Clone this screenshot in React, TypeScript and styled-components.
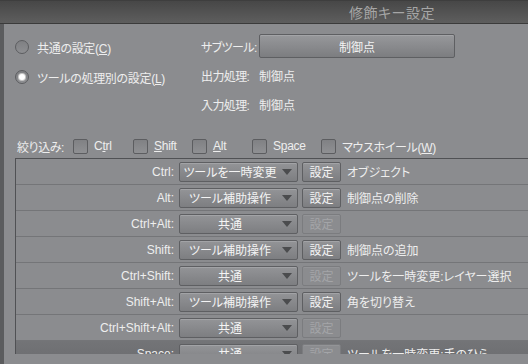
import styled, { createGlobalStyle } from 'styled-components'

const GlobalStyle = createGlobalStyle`
  html, body {
    margin: 0;
    padding: 0;
    background: #8b8c8f;
  }
  body {
    font-family: "Liberation Sans", "Noto Sans CJK JP", sans-serif;
    font-size: 12px;
    font-feature-settings: "palt";
    color: #eeeeee;
  }
`

const Window = styled.div`
  width: 528px;
  height: 364px;
  overflow: hidden;
  background: #8b8c8f;
  display: flex;
  flex-direction: column;
`

const TitleBar = styled.div`
  flex: none;
  height: 24px;
  box-sizing: border-box;
  border-top: 1px solid #3e3e3e;
  border-bottom: 1px solid #3b3b3b;
  background: linear-gradient(#474747, #5e5e5e);
  display: flex;
  align-items: center;
  padding-left: 349px;
  color: #a6a6a6;
  font-size: 14px;
  letter-spacing: 0.5px;
`

const Main = styled.div`
  flex: 1;
  display: flex;
  min-height: 0;
`

const Strip = styled.div`
  width: 4px;
  flex: none;
  background: #5b5c5e;
`

const Content = styled.div`
  flex: 1;
  min-width: 0;
  padding: 10px 0 0 11px;
  display: flex;
  flex-direction: column;
`

const Top = styled.div`
  display: grid;
  grid-template-columns: 186px 1fr;
`

const RadioColumn = styled.div`
  display: flex;
  flex-direction: column;
  gap: 6px;
  padding-top: 1px;
`

const RadioRow = styled.label`
  height: 24px;
  display: flex;
  align-items: center;
  gap: 8px;
  white-space: nowrap;
  letter-spacing: -0.3px;
`

const RadioDot = styled.span<{ $on?: boolean }>`
  width: 14px;
  height: 14px;
  box-sizing: border-box;
  border-radius: 50%;
  border: 1px solid #5c5d60;
  background: linear-gradient(#7f8083, #8e8f92);
  display: flex;
  align-items: center;
  justify-content: center;
  &::after {
    content: '';
    display: ${(p) => (p.$on ? 'block' : 'none')};
    width: 6px;
    height: 6px;
    border-radius: 50%;
    background: #ffffff;
    box-shadow: 0 0 0 1px #c8c8c8;
  }
`

const InfoColumn = styled.div`
  display: flex;
  flex-direction: column;
  gap: 5px;
`

const InfoRow = styled.div`
  height: 24px;
  display: grid;
  grid-template-columns: 58px 196px;
  align-items: center;
  white-space: nowrap;
`

const InfoLabel = styled.span`
  letter-spacing: -0.6px;
`

const WideButton = styled.div`
  height: 24px;
  box-sizing: border-box;
  border: 1px solid #5e5f62;
  border-radius: 2px;
  background: linear-gradient(#97989b, #7c7d80);
  box-shadow: inset 0 1px 0 #a3a4a7;
  display: flex;
  align-items: center;
  justify-content: center;
  color: #f4f4f4;
`

const FilterRow = styled.div`
  margin-top: 20px;
  height: 20px;
  display: flex;
  align-items: center;
  padding-left: 2px;
  white-space: nowrap;
`

const FilterLabel = styled.span`
  margin-right: 9px;
  letter-spacing: -0.4px;
`

const CheckItem = styled.label<{ $w: number }>`
  width: ${(p) => p.$w}px;
  display: flex;
  align-items: center;
  gap: 6px;
  letter-spacing: -0.3px;
`

const CheckBox = styled.span`
  width: 15px;
  height: 15px;
  flex: none;
  box-sizing: border-box;
  border: 1px solid #5c5d60;
  border-radius: 2px;
  background: linear-gradient(#808184, #8f9093);
`

const Table = styled.div`
  margin-top: 2px;
  height: 196px;
  flex: none;
  border-top: 1px solid #505154;
  border-left: 1px solid #505154;
  box-sizing: border-box;
  overflow: hidden;
`

const Row = styled.div<{ $dark?: boolean }>`
  height: 26px;
  box-sizing: border-box;
  border-bottom: 1px solid #747578;
  display: flex;
  align-items: center;
  background: ${(p) => (p.$dark ? 'linear-gradient(#737477, #6b6c6f)' : 'transparent')};
`

const KeyLabel = styled.span`
  width: 158px;
  flex: none;
  text-align: right;
  margin-right: 5px;
  white-space: nowrap;
`

const Select = styled.div`
  width: 119px;
  height: 20px;
  flex: none;
  box-sizing: border-box;
  border: 1px solid #5e5f62;
  border-radius: 2px;
  background: linear-gradient(#939497, #7d7e81);
  box-shadow: inset 0 1px 0 #a2a3a6;
  display: flex;
  align-items: center;
  color: #f4f4f4;
  white-space: nowrap;
`

const SelectText = styled.span`
  flex: 1;
  text-align: center;
`

const Arrow = styled.span`
  width: 0;
  height: 0;
  border-left: 5px solid transparent;
  border-right: 5px solid transparent;
  border-top: 6px solid #4b4c4e;
  margin: 0 5px 0 2px;
`

const SetButton = styled.div<{ $off?: boolean }>`
  width: 39px;
  height: 20px;
  flex: none;
  margin-left: 4px;
  box-sizing: border-box;
  border: 1px solid ${(p) => (p.$off ? '#7b7c7f' : '#5e5f62')};
  border-radius: 2px;
  background: ${(p) => (p.$off ? '#8b8c8f' : 'linear-gradient(#939497, #7d7e81)')};
  box-shadow: ${(p) => (p.$off ? 'inset 0 1px 0 #939497' : 'inset 0 1px 0 #a2a3a6')};
  display: flex;
  align-items: center;
  justify-content: center;
  color: ${(p) => (p.$off ? '#a4a5a8' : '#f4f4f4')};
`

const Desc = styled.span`
  margin-left: 6px;
  white-space: nowrap;
`

const rows = [
  { key: 'Ctrl:', mode: 'ツールを一時変更', desc: 'オブジェクト' },
  { key: 'Alt:', mode: 'ツール補助操作', desc: '制御点の削除' },
  { key: 'Ctrl+Alt:', mode: '共通', desc: '', off: true },
  { key: 'Shift:', mode: 'ツール補助操作', desc: '制御点の追加' },
  { key: 'Ctrl+Shift:', mode: '共通', desc: 'ツールを一時変更:レイヤー選択', off: true },
  { key: 'Shift+Alt:', mode: 'ツール補助操作', desc: '角を切り替え' },
  { key: 'Ctrl+Shift+Alt:', mode: '共通', desc: '', off: true },
  { key: 'Space:', mode: '共通', desc: 'ツールを一時変更:手のひら', off: true, dark: true },
]

const App = () => {
  return (
    <Window>
      <GlobalStyle />
      <TitleBar>修飾キー設定</TitleBar>
      <Main>
        <Strip />
        <Content>
          <Top>
            <RadioColumn>
              <RadioRow>
                <RadioDot />
                <span>
                  共通の設定(<u>C</u>)
                </span>
              </RadioRow>
              <RadioRow>
                <RadioDot $on />
                <span>
                  ツールの処理別の設定(<u>L</u>)
                </span>
              </RadioRow>
            </RadioColumn>
            <InfoColumn>
              <InfoRow>
                <InfoLabel>サブツール:</InfoLabel>
                <WideButton>制御点</WideButton>
              </InfoRow>
              <InfoRow>
                <InfoLabel>出力処理:</InfoLabel>
                <span>制御点</span>
              </InfoRow>
              <InfoRow>
                <InfoLabel>入力処理:</InfoLabel>
                <span>制御点</span>
              </InfoRow>
            </InfoColumn>
          </Top>
          <FilterRow>
            <FilterLabel>絞り込み:</FilterLabel>
            <CheckItem $w={60}>
              <CheckBox />
              <span>
                C<u>t</u>rl
              </span>
            </CheckItem>
            <CheckItem $w={59}>
              <CheckBox />
              <span>
                <u>S</u>hift
              </span>
            </CheckItem>
            <CheckItem $w={60}>
              <CheckBox />
              <span>
                <u>A</u>lt
              </span>
            </CheckItem>
            <CheckItem $w={69}>
              <CheckBox />
              <span>
                S<u>p</u>ace
              </span>
            </CheckItem>
            <CheckItem $w={140}>
              <CheckBox />
              <span>
                マウスホイール(<u>W</u>)
              </span>
            </CheckItem>
          </FilterRow>
          <Table>
            {rows.map((r) => (
              <Row key={r.key} $dark={r.dark}>
                <KeyLabel>{r.key}</KeyLabel>
                <Select>
                  <SelectText>{r.mode}</SelectText>
                  <Arrow />
                </Select>
                <SetButton $off={r.off}>設定</SetButton>
                <Desc>{r.desc}</Desc>
              </Row>
            ))}
          </Table>
        </Content>
      </Main>
    </Window>
  )
}

export default App
